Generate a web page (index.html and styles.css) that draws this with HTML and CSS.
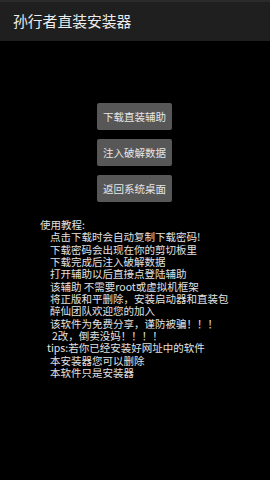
FILE: index.html
```html
<!DOCTYPE html>
<html>
<head>
<meta charset="utf-8">
<link rel="stylesheet" href="styles.css">
</head>
<body>
<div class="header"><span class="title">孙行者直装安装器</span></div>
<div class="main">
  <div class="buttons">
    <div class="btn">下载直装辅助</div>
    <div class="btn">注入破解数据</div>
    <div class="btn">返回系统桌面</div>
  </div>
  <div class="text">
    <div class="l0">使用教程:</div>
    <div class="l1">点击下载时会自动复制下载密码!</div>
    <div class="l1">下载密码会出现在你的剪切板里</div>
    <div class="l1">下载完成后注入破解数据</div>
    <div class="l1">打开辅助以后直接点登陆辅助</div>
    <div class="l1">该辅助 不需要root或虚拟机框架</div>
    <div class="l1">将正版和平删除，安装启动器和直装包</div>
    <div class="l1">醉仙团队欢迎您的加入</div>
    <div class="l1">该软件为免费分享，谨防被骗！！！</div>
    <div class="l2">2改，倒卖没妈！！！！</div>
    <div class="l3">tips:若你已经安装好网址中的软件</div>
    <div class="l1">本安装器您可以删除</div>
    <div class="l1">本软件只是安装器</div>
  </div>
</div>
</body>
</html>
```
FILE: styles.css
```css
html, body {
  margin: 0;
  padding: 0;
  background: #000;
  width: 270px;
  height: 480px;
  overflow: hidden;
  font-family: "Noto Sans CJK SC", "Noto Sans", sans-serif;
}
.header {
  height: 39px;
  border-top: 2px solid #2b2b2b;
  background: #1f1f1f;
  display: flex;
  align-items: center;
  padding-left: 13px;
}
.title {
  color: #ececec;
  font-size: 14.8px;
  line-height: 1;
  margin-top: 0px;
}
.main {
  display: flex;
  flex-direction: column;
}
.buttons {
  margin-top: 62px;
  display: flex;
  flex-direction: column;
  align-items: center;
  gap: 9px;
}
.btn {
  width: 75px;
  height: 27px;
  margin-right: 1px;
  box-sizing: border-box;
  background: #575757;
  border-radius: 2px;
  color: #e6e6e6;
  font-size: 10.5px;
  display: flex;
  align-items: center;
  justify-content: center;
}
.text {
  margin-top: 17px;
  color: #e2e2e2;
  font-size: 10.5px;
  line-height: 12.33px;
  white-space: nowrap;
}
.l0 { padding-left: 40px; }
.l1 { padding-left: 50px; }
.l2 { padding-left: 52px; }
.l3 { padding-left: 47px; }
```
